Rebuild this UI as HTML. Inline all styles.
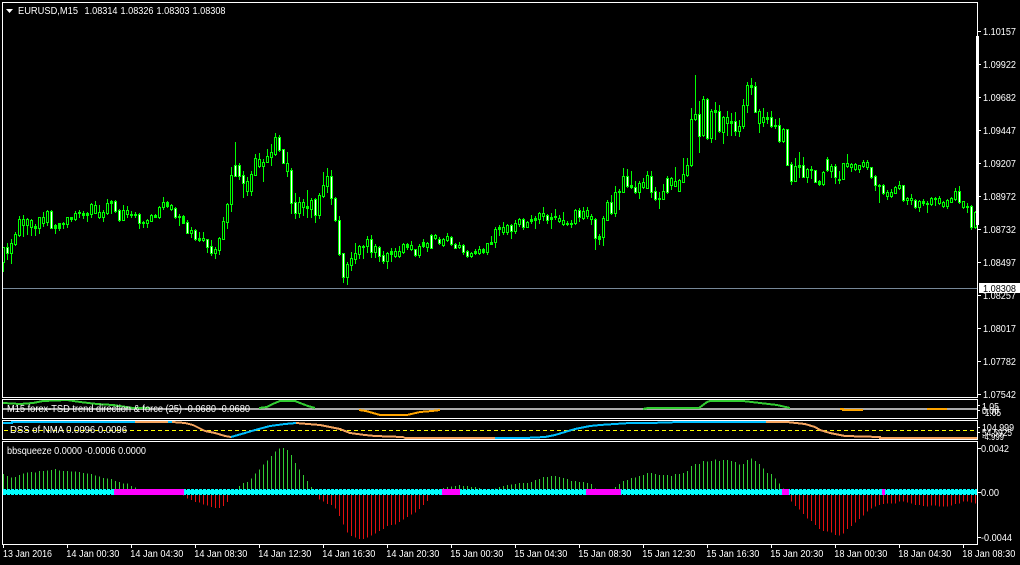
<!DOCTYPE html>
<html><head><meta charset="utf-8"><title>EURUSD,M15</title>
<style>html,body{margin:0;padding:0;background:#000;overflow:hidden}svg{display:block}
text{font-family:"Liberation Sans",sans-serif;font-size:10px;fill:#fff}</style></head>
<body>
<svg width="1020" height="565" viewBox="0 0 1020 565" xmlns="http://www.w3.org/2000/svg">
<rect width="1020" height="565" fill="#000"/>
<path d="M3 288.5H978" stroke="#778899" fill="none" shape-rendering="crispEdges"/>
<g transform="translate(.5,0)" fill="none" shape-rendering="crispEdges">
<path stroke="#00ff00" d="M3 247V272M7 243V260M11 239V264M15 232V246M19 216V237M23 215V237M27 218V235M31 219V236M35 224V236M39 217V234M43 212V227M47 210V226M51 210V229M55 224V234M59 223V231M63 222V229M67 217V228M71 217V222M75 211V221M79 210V218M83 211V219M87 212V222M91 203V218M95 201V214M99 205V219M103 210V222M107 199V215M111 200V214M115 200V213M119 209V222M123 205V221M127 206V218M131 211V218M135 212V218M139 213V229M143 221V228M147 219V228M151 214V222M155 214V218M159 206V219M163 197V210M167 201V208M171 204V211M175 207V219M179 214V226M183 215V224M187 220V234M191 227V238M195 229V241M199 232V242M203 232V242M207 239V253M211 240V256M215 247V259M219 237V255M223 217V240M227 203V229M231 167V212M235 142V177M239 163V180M243 171V198M247 177V196M251 171V196M255 154V176M259 153V168M263 159V182M267 149V163M271 144V166M275 133V156M279 135V152M283 149V164M287 152V177M291 168V214M295 193V219M299 197V218M303 199V216M307 190V218M311 198V218M315 198V223M319 193V219M323 172V198M327 168V193M331 170V205M335 197V222M339 216V256M343 253V283M347 262V285M351 252V271M355 243V264M359 245V259M363 245V259M367 236V253M371 235V258M375 244V258M379 246V262M383 251V264M387 252V269M391 248V262M395 248V258M399 246V258M403 243V254M407 243V250M411 241V251M415 249V257M419 244V258M423 239V248M427 242V252M431 234V249M435 234V240M439 237V245M443 238V247M447 233V242M451 236V246M455 243V249M459 242V249M463 244V255M467 250V258M471 252V258M475 249V255M479 246V255M483 248V254M487 243V255M491 236V245M495 227V248M499 225V236M503 222V235M507 224V235M511 224V239M515 220V234M519 218V227M523 218V230M527 221V228M531 215V224M535 216V229M539 212V224M543 207V221M547 214V224M551 213V229M555 209V220M559 215V223M563 212V226M567 221V226M571 220V228M575 209V225M579 208V222M583 207V220M587 207V219M591 214V225M595 218V250M599 234V245M603 216V246M607 200V221M611 195V215M615 186V217M619 189V210M623 168V193M627 169V188M631 171V189M635 181V194M639 181V199M643 178V189M647 171V189M651 171V198M655 187V201M659 192V209M663 184V200M667 176V194M671 177V190M675 167V187M679 179V192M683 158V183M687 158V177M691 108V167M695 75V121M699 101V153M703 96V137M707 98V140M711 109V143M715 102V140M719 105V133M723 116V144M727 111V136M731 113V136M735 112V136M739 120V137M743 99V129M747 82V113M751 78V95M755 82V113M759 109V133M763 108V127M767 112V124M771 111V128M775 119V129M779 118V143M783 128V143M787 129V166M791 162V185M795 158V182M799 152V178M803 157V178M807 168V183M811 166V179M815 170V183M819 180V186M823 171V186M827 157V172M831 164V178M835 164V184M839 171V184M843 163V180M847 154V168M851 163V172M855 163V171M859 165V173M863 160V168M867 160V170M871 167V179M875 175V191M879 184V203M883 184V195M887 190V200M891 189V198M895 186V194M899 181V190M903 185V202M907 197V205M911 194V205M915 199V209M919 200V212M923 199V206M927 201V213M931 197V206M935 197V206M939 196V205M943 201V208M947 199V209M951 197V203M955 188V201M959 186V204M963 201V209M967 203V213M971 205V230M975 211V229"/>
<path stroke="#00ff00" stroke-width="3" d="M3 247V263M7 247V254M11 243V254M15 234V245M19 219V236M23 219V226M27 219V226M31 220V228M35 226V229M39 217V229M43 217V224M47 211V223M51 211V229M55 225V229M59 223V229M63 223V225M67 217V225M71 217V220M75 213V220M79 212V214M83 213V216M87 213V216M91 204V215M95 205V214M99 212V218M103 212V218M107 203V214M111 201V204M115 201V212M119 210V221M123 210V221M127 210V215M131 214V216M135 214V216M139 214V224M143 222V224M147 220V224M151 215V222M155 215V218M159 207V218M163 202V208M167 202V207M171 205V210M175 208V218M179 216V218M183 216V224M187 222V234M191 230V234M195 230V240M199 238V241M203 238V241M207 239V248M211 246V254M215 249V254M219 238V251M223 221V240M227 204V223M231 175V205M235 165V177M239 165V177M243 175V184M247 181V192M251 174V192M255 158V176M259 159V167M263 162V167M267 156V163M271 152V158M275 137V155M279 137V151M283 149V164M287 163V172M291 170V204M295 202V214M299 202V214M303 202V208M307 206V209M311 200V210M315 199V216M319 195V216M323 185V197M327 176V187M331 176V199M335 198V221M339 220V255M343 253V278M347 264V278M351 258V266M355 253V260M359 246V255M363 246V248M367 239V247M371 239V253M375 246V253M379 247V257M383 255V262M387 253V262M391 251V255M395 251V257M399 251V257M403 244V253M407 244V248M411 245V250M415 249V256M419 246V256M423 242V247M427 243V248M431 235V249M435 235V239M439 239V244M443 239V246M447 236V241M451 237V245M455 244V249M459 245V248M463 245V253M467 251V257M471 253V257M475 251V254M479 249V254M483 249V253M487 243V253M491 242V245M495 229V243M499 227V230M503 227V233M507 225V233M511 225V232M515 223V232M519 219V225M523 219V228M527 222V228M531 219V222M535 218V221M539 213V220M543 213V217M547 215V221M551 217V220M555 216V218M559 218V222M563 220V225M567 223V225M571 223V225M575 210V224M579 210V218M583 211V219M587 210V217M591 216V220M595 219V239M599 236V240M603 218V238M607 202V221M611 202V214M615 192V214M619 191V193M623 176V193M627 176V187M631 185V188M635 187V193M639 183V193M643 182V188M647 175V189M651 176V193M655 191V200M659 198V200M663 191V200M667 178V193M671 178V186M675 181V187M679 180V192M683 174V183M687 165V176M691 119V166M695 114V120M699 114V137M703 99V136M707 99V139M711 111V139M715 110V113M719 111V132M723 117V133M727 117V124M731 121V124M735 121V132M739 126V132M743 105V127M747 85V106M751 85V88M755 86V113M759 111V124M763 117V123M767 117V120M771 117V127M775 125V127M779 125V142M783 129V142M787 129V166M791 164V182M795 166V182M799 165V168M803 165V178M807 169V178M811 169V171M815 170V183M819 181V185M823 172V185M827 159V171M831 166V172M835 166V178M839 179V181M843 163V180M847 163V167M851 164V168M855 164V170M859 165V170M863 162V167M867 162V168M871 167V178M875 176V186M879 185V187M883 185V194M887 192V197M891 192V197M895 187V194M899 185V189M903 185V201M907 198V201M911 198V201M915 200V208M919 201V208M923 201V204M927 203V205M931 198V205M935 198V200M939 198V204M943 202V207M947 200V207M951 198V203M955 191V200M959 191V203M963 201V208M967 206V208M971 206V228M975 212V228"/>
<path stroke="#fff" d="M7 248V253M51 212V228M115 202V211M119 211V220M139 215V223M175 209V217M187 223V233M195 231V239M207 240V247M211 247V253M235 166V176M239 166V176M243 176V183M279 138V150M283 150V163M291 171V203M295 203V213M315 200V215M331 177V198M335 199V220M339 221V254M343 254V277M371 240V252M379 248V256M383 256V261M415 250V255M431 236V248M439 240V243M451 238V244M455 245V248M463 246V252M467 252V256M511 226V231M523 220V227M547 216V220M579 211V217M595 220V238M611 203V213M627 177V186M635 188V192M651 177V192M655 192V199M667 179V192M699 115V136M707 100V138M719 112V131M735 122V131M755 87V112M771 118V126M779 126V141M787 130V165M791 165V181M803 166V177M815 171V182M827 160V170M835 167V177M871 168V177M875 177V185M883 186V193M903 186V200M915 201V207M959 192V202M971 207V227"/>
<path stroke="#000" d="M3 248V262M11 244V253M15 235V244M19 220V235M23 220V225M27 220V225M31 221V227M39 218V228M43 218V223M47 212V222M67 218V224M75 214V219M91 205V214M95 206V213M99 213V217M103 213V217M107 204V213M123 211V220M127 211V214M147 221V223M151 216V221M159 208V217M163 203V207M171 206V209M191 231V233M203 239V240M215 250V253M219 239V250M223 222V239M227 205V222M231 176V204M247 182V191M251 175V191M255 159V175M259 160V166M263 163V166M267 157V162M271 153V157M275 138V154M287 164V171M299 203V213M303 203V207M311 201V209M319 196V215M323 186V196M327 177V186M347 265V277M351 259V265M355 254V259M359 247V254M367 240V246M375 247V252M387 254V261M395 252V256M399 252V256M403 245V252M411 246V249M419 247V255M427 244V247M435 236V238M443 240V245M447 237V240M459 246V247M471 254V256M479 250V253M487 244V252M495 230V242M503 228V232M507 226V232M515 224V231M519 220V224M527 223V227M539 214V219M543 214V216M559 219V221M563 221V224M575 211V223M583 212V218M587 211V216M591 217V219M603 219V237M607 203V220M615 193V213M623 177V192M639 184V192M643 183V187M647 176V188M663 192V199M671 179V185M675 182V186M679 181V191M683 175V182M687 166V175M691 120V165M695 115V119M703 100V135M711 112V138M723 118V132M727 118V123M739 127V131M743 106V126M747 86V105M759 112V123M763 118V122M783 130V141M795 167V181M807 170V177M823 173V184M831 167V171M843 164V179M847 164V166M851 165V167M855 165V169M859 166V169M863 163V166M867 163V167M887 193V196M891 193V196M895 188V193M899 186V188M907 199V200M911 199V200M919 202V207M931 199V204M939 199V203M943 203V206M947 201V206M951 199V202M955 192V199M963 202V207M975 213V227"/>
</g>

<!-- panel 1 -->
<g fill="none" stroke-width="2" shape-rendering="crispEdges">
<path stroke="#aaaaaa" d="M3 409H977"/>
<polyline stroke="#32cd32" points="3,403 20,404 33,403 43,401 67,400 80,402 97,404 113,405 133,408 150,408"/>
<polyline stroke="#32cd32" points="259,408 267,407 275,403 280,401 295,401 300,403 308,406 315,408"/>
<polyline stroke="#ffa500" points="359,410 366,411 373,413 380,415 407,415 420,412 432,411 440,410"/>
<polyline stroke="#32cd32" points="643,409 648,408 699,408 707,402 710,401 743,401 760,403 777,405 790,408"/>
<path stroke="#ffa500" d="M840 409H843V410H863M927 409H947"/>
</g>
<text x="7" y="412" textLength="243" lengthAdjust="spacingAndGlyphs">M15 forex-TSD trend direction &amp; force (25) -0.0680 -0.0680</text>

<!-- panel 2 -->
<path d="M4 430.5H977" stroke="#ffff00" stroke-dasharray="4 3" fill="none" shape-rendering="crispEdges"/>
<g fill="none" stroke-width="2" shape-rendering="crispEdges">
<polyline stroke="#00bfff" points="3,423 12,423 12,422 135,422"/>
<polyline stroke="#f4a460" points="135,422 168,422"/>
<polyline stroke="#00bfff" points="168,422 172,422"/>
<polyline stroke="#f4a460" points="172,422 185,423 193,425 205,431 215,433 225,436 231,437"/>
<polyline stroke="#00bfff" points="231,437 245,433 255,430 270,426 285,424 296,423"/>
<polyline stroke="#f4a460" points="296,423 320,425 340,429 350,433 365,435 375,436 403,437 405,438 495,438"/>
<polyline stroke="#00bfff" points="495,438 525,438 545,437 555,435 565,432 575,429 590,426 600,425 630,423 650,423 680,422 766,422"/>
<polyline stroke="#f4a460" points="766,422 787,422 805,424 815,427 820,430 830,433 845,436 880,437 880,438 977,438"/>
</g>
<text x="10" y="433" textLength="117" lengthAdjust="spacingAndGlyphs">DSS of NMA 0.0096 0.0096</text>

<!-- panel 3 histogram, drawn in 3x units -->
<g transform="translate(0,390) scale(.33333)" fill="none" stroke-width="3" shape-rendering="crispEdges">
<path stroke="#32cd32" d="M10 298V252M22 298V258M34 298V262M46 298V261M58 298V255M70 298V251M82 298V248M94 298V246M106 298V248M118 298V243M130 298V243M142 298V241M154 298V240M166 298V237M178 298V241M190 298V243M202 298V243M214 298V244M226 298V244M238 298V246M250 298V249M262 298V250M274 298V252M286 298V256M298 298V260M310 298V264M322 298V265M334 298V267M346 298V273M358 298V276M370 298V280M382 298V281M394 298V288M406 298V292M718 298V288M730 298V279M742 298V276M754 298V265M766 298V250M778 298V238M790 298V224M802 298V212M814 298V198M826 298V184M838 298V175M850 298V174M862 298V180M874 298V195M886 298V219M898 298V238M910 298V255M922 298V273M934 298V291"/>
<path stroke="#e01010" d="M550 314V316M562 314V325M574 314V330M586 314V336M598 314V337M610 314V343M622 314V346M634 314V351M646 314V354M658 314V354M670 314V348M682 314V336M958 314V328M970 314V335M982 314V342M994 314V345M1006 314V356M1018 314V378"/>
</g>
<g transform="translate(340,390) scale(.33333)" fill="none" stroke-width="3" shape-rendering="crispEdges">
<path stroke="#e01010" d="M10 314V404M22 314V427M34 314V438M46 314V443M58 314V447M70 314V447M82 314V442M94 314V437M106 314V430M118 314V423M130 314V417M142 314V408M154 314V405M166 314V403M178 314V396M190 314V388M202 314V381M214 314V373M226 314V368M238 314V357M250 314V345M262 314V333"/>
<path stroke="#32cd32" d="M310 298V294M322 298V291M334 298V289M346 298V288M358 298V285M370 298V288M382 298V288M394 298V291M406 298V291M418 298V294M466 298V295M478 298V291M490 298V288M502 298V285M514 298V284M526 298V282M538 298V279M550 298V279M562 298V279M574 298V276M586 298V270M598 298V267M610 298V261M622 298V261M634 298V258M646 298V258M658 298V261M670 298V264M682 298V267M694 298V273M706 298V273M718 298V276M730 298V276M742 298V279M754 298V282M766 298V295M826 298V291M838 298V282M850 298V273M862 298V270M874 298V264M886 298V262M898 298V258M910 298V255M922 298V249M934 298V249M946 298V252M958 298V255M970 298V255M982 298V255M994 298V258M1006 298V252M1018 298V252"/>
</g>
<g transform="translate(680,390) scale(.33333)" fill="none" stroke-width="3" shape-rendering="crispEdges">
<path stroke="#32cd32" d="M10 298V249M22 298V243M34 298V228M46 298V222M58 298V222M70 298V213M82 298V215M94 298V213M106 298V208M118 298V213M130 298V210M142 298V210M154 298V213M166 298V216M178 298V224M190 298V222M202 298V210M214 298V205M226 298V213M238 298V222M250 298V236M262 298V249M274 298V252M286 298V265M298 298V280M310 298V295"/>
<path stroke="#e01010" d="M334 314V335M346 314V348M358 314V358M370 314V372M382 314V385M394 314V393M406 314V405M418 314V417M430 314V423M442 314V425M454 314V427M466 314V435M478 314V437M490 314V430M502 314V417M514 314V408M526 314V398M538 314V387M550 314V377M562 314V365M574 314V355M586 314V350M598 314V345M610 314V342M622 314V340M634 314V340M646 314V340M658 314V335M670 314V335M682 314V338M694 314V340M706 314V345M718 314V345M730 314V348M742 314V350M754 314V347M766 314V347M778 314V350M790 314V350M802 314V350M814 314V347M826 314V342M838 314V340M850 314V335M862 314V335M874 314V338M886 314V340"/>
</g>
<!-- squeeze band -->
<g shape-rendering="crispEdges">
<rect x="3" y="490" width="974" height="4" fill="#00ffff"/>
<path d="M3 489.5H977M3 494.5H977" stroke="#00ffff" stroke-dasharray="3 1" fill="none"/>
<path d="M114 492H184M442 492H460M586 492H621M782 492H789M882 492H885" stroke="#ff00ff" stroke-width="6" fill="none"/>
</g>
<text x="7" y="454" textLength="139" lengthAdjust="spacingAndGlyphs">bbsqueeze 0.0000 -0.0006 0.0000</text>

<!-- frames & ticks -->
<g fill="none" stroke="#fff" shape-rendering="crispEdges">
<path d="M2.5 2.5H977.5V397.5H2.5ZM2.5 399.5H977.5V418.5H2.5ZM2.5 420.5H977.5V439.5H2.5ZM2.5 441.5H977.5V544.5H2.5Z"/>
<path d="M977.5 36V225" stroke-width="3"/>
<path d="M978 31.5H981M978 64.5H981M978 97.5H981M978 130.5H981M978 163.5H981M978 196.5H981M978 229.5H981M978 262.5H981M978 295.5H981M978 328.5H981M978 361.5H981M978 394.5H981M978 405.5H980M978 410.5H980M978 427.5H980M978 432.5H980M978 448.5H981M978 492.5H981M978 537.5H981"/>
<path d="M3.5 545V548M67.5 545V548M131.5 545V548M195.5 545V548M259.5 545V548M323.5 545V548M387.5 545V548M451.5 545V548M515.5 545V548M579.5 545V548M643.5 545V548M707.5 545V548M771.5 545V548M835.5 545V548M899.5 545V548M963.5 545V548"/>
</g>

<!-- header -->
<path d="M6 9H13L9.5 13Z" fill="#fff"/>
<text x="18" y="14" textLength="60" lengthAdjust="spacingAndGlyphs">EURUSD,M15</text>
<text x="84.5" y="14" textLength="33" lengthAdjust="spacingAndGlyphs">1.08314</text>
<text x="120.5" y="14" textLength="33" lengthAdjust="spacingAndGlyphs">1.08326</text>
<text x="156.5" y="14" textLength="33" lengthAdjust="spacingAndGlyphs">1.08303</text>
<text x="192.5" y="14" textLength="33" lengthAdjust="spacingAndGlyphs">1.08308</text>

<!-- price axis -->
<g>
<text x="983" y="35" textLength="33" lengthAdjust="spacingAndGlyphs">1.10157</text>
<text x="983" y="68" textLength="33" lengthAdjust="spacingAndGlyphs">1.09922</text>
<text x="983" y="101" textLength="33" lengthAdjust="spacingAndGlyphs">1.09682</text>
<text x="983" y="134" textLength="33" lengthAdjust="spacingAndGlyphs">1.09447</text>
<text x="983" y="167" textLength="33" lengthAdjust="spacingAndGlyphs">1.09207</text>
<text x="983" y="200" textLength="33" lengthAdjust="spacingAndGlyphs">1.08972</text>
<text x="983" y="233" textLength="33" lengthAdjust="spacingAndGlyphs">1.08732</text>
<text x="983" y="266" textLength="33" lengthAdjust="spacingAndGlyphs">1.08497</text>
<text x="983" y="299" textLength="33" lengthAdjust="spacingAndGlyphs">1.08257</text>
<text x="983" y="332" textLength="33" lengthAdjust="spacingAndGlyphs">1.08017</text>
<text x="983" y="365" textLength="33" lengthAdjust="spacingAndGlyphs">1.07782</text>
<text x="983" y="398" textLength="33" lengthAdjust="spacingAndGlyphs">1.07542</text>
<rect x="979" y="283" width="41" height="10" fill="#fff"/>
<text x="983" y="292" textLength="33" lengthAdjust="spacingAndGlyphs" style="fill:#000">1.08308</text>
<text x="982" y="410" textLength="17" lengthAdjust="spacingAndGlyphs">1.05</text>
<text x="982" y="414" textLength="17" lengthAdjust="spacingAndGlyphs">0.00</text>
<text x="982" y="416" textLength="19" lengthAdjust="spacingAndGlyphs">-1.05</text>
<text x="982" y="431" textLength="32" lengthAdjust="spacingAndGlyphs">104.999</text>
<text x="982" y="436" textLength="30" lengthAdjust="spacingAndGlyphs">54.5925</text>
<text x="982" y="440" textLength="22" lengthAdjust="spacingAndGlyphs">-4.999</text>
<rect x="978" y="440" width="42" height="3" fill="#000"/>
<text x="981" y="452" textLength="28" lengthAdjust="spacingAndGlyphs">0.0042</text>
<text x="981" y="496" textLength="18" lengthAdjust="spacingAndGlyphs">0.00</text>
<text x="981" y="541" textLength="31" lengthAdjust="spacingAndGlyphs">-0.0044</text>
</g>

<!-- time axis -->
<g>
<text x="3" y="557" textLength="49" lengthAdjust="spacingAndGlyphs">13 Jan 2016</text>
<text x="66.3" y="557" textLength="53" lengthAdjust="spacingAndGlyphs">14 Jan 00:30</text>
<text x="130.3" y="557" textLength="53" lengthAdjust="spacingAndGlyphs">14 Jan 04:30</text>
<text x="194.3" y="557" textLength="53" lengthAdjust="spacingAndGlyphs">14 Jan 08:30</text>
<text x="258.3" y="557" textLength="53" lengthAdjust="spacingAndGlyphs">14 Jan 12:30</text>
<text x="322.3" y="557" textLength="53" lengthAdjust="spacingAndGlyphs">14 Jan 16:30</text>
<text x="386.3" y="557" textLength="53" lengthAdjust="spacingAndGlyphs">14 Jan 20:30</text>
<text x="450.3" y="557" textLength="53" lengthAdjust="spacingAndGlyphs">15 Jan 00:30</text>
<text x="514.3" y="557" textLength="53" lengthAdjust="spacingAndGlyphs">15 Jan 04:30</text>
<text x="578.3" y="557" textLength="53" lengthAdjust="spacingAndGlyphs">15 Jan 08:30</text>
<text x="642.3" y="557" textLength="53" lengthAdjust="spacingAndGlyphs">15 Jan 12:30</text>
<text x="706.3" y="557" textLength="53" lengthAdjust="spacingAndGlyphs">15 Jan 16:30</text>
<text x="770.3" y="557" textLength="53" lengthAdjust="spacingAndGlyphs">15 Jan 20:30</text>
<text x="834.3" y="557" textLength="53" lengthAdjust="spacingAndGlyphs">18 Jan 00:30</text>
<text x="898.3" y="557" textLength="53" lengthAdjust="spacingAndGlyphs">18 Jan 04:30</text>
<text x="962.3" y="557" textLength="53" lengthAdjust="spacingAndGlyphs">18 Jan 08:30</text>
</g>
</svg>
</body></html>
